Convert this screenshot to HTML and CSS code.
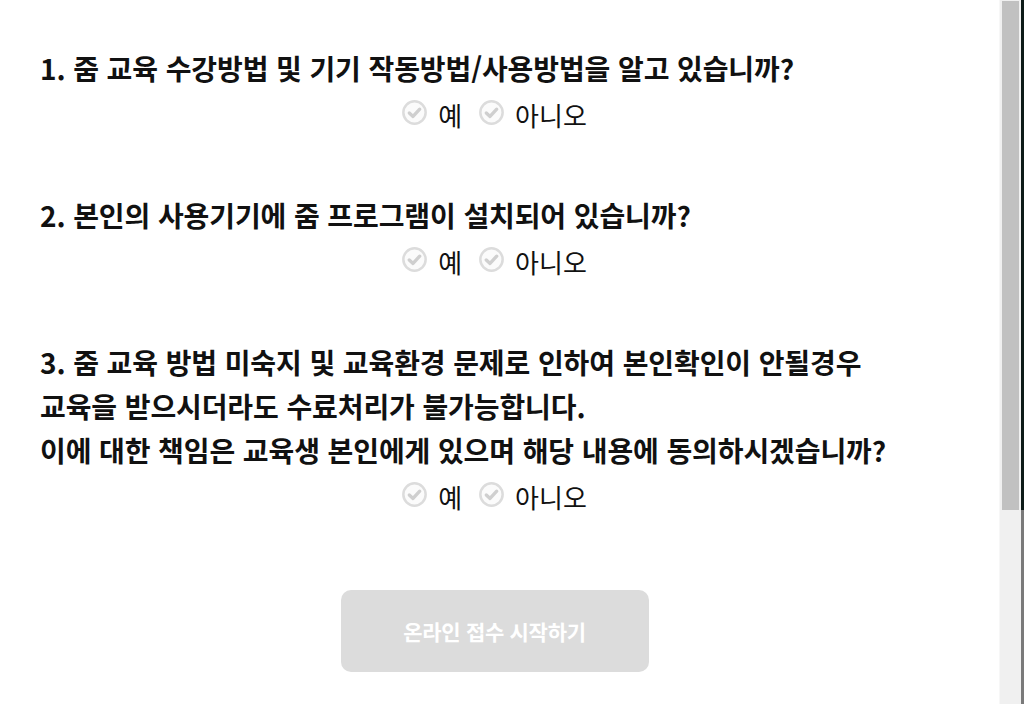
FILE: index.html
```html
<!DOCTYPE html>
<html lang="ko">
<head>
<meta charset="utf-8">
<title>온라인 접수</title>
<link rel="stylesheet" href="styles.css">
</head>
<body>
<div class="window">
  <main class="content">
    <section class="question">
      <h2 class="q-title">1. 줌 교육 수강방법 및 기기 작동방법/사용방법을 알고 있습니까?</h2>
      <div class="options">
        <label class="opt"><svg class="chk" viewBox="0 0 24 24"><circle cx="12" cy="12" r="10.7" /><path d="M7 12.4 L10.6 15.8 L17 8.8" /></svg><span>예</span></label>
        <label class="opt"><svg class="chk" viewBox="0 0 24 24"><circle cx="12" cy="12" r="10.7" /><path d="M7 12.4 L10.6 15.8 L17 8.8" /></svg><span>아니오</span></label>
      </div>
    </section>
    <section class="question">
      <h2 class="q-title">2. 본인의 사용기기에 줌 프로그램이 설치되어 있습니까?</h2>
      <div class="options">
        <label class="opt"><svg class="chk" viewBox="0 0 24 24"><circle cx="12" cy="12" r="10.7" /><path d="M7 12.4 L10.6 15.8 L17 8.8" /></svg><span>예</span></label>
        <label class="opt"><svg class="chk" viewBox="0 0 24 24"><circle cx="12" cy="12" r="10.7" /><path d="M7 12.4 L10.6 15.8 L17 8.8" /></svg><span>아니오</span></label>
      </div>
    </section>
    <section class="question">
      <h2 class="q-title">3. 줌 교육 방법 미숙지 및 교육환경 문제로 인하여 본인확인이 안될경우<br>교육을 받으시더라도 수료처리가 불가능합니다.<br>이에 대한 책임은 교육생 본인에게 있으며 해당 내용에 동의하시겠습니까?</h2>
      <div class="options">
        <label class="opt"><svg class="chk" viewBox="0 0 24 24"><circle cx="12" cy="12" r="10.7" /><path d="M7 12.4 L10.6 15.8 L17 8.8" /></svg><span>예</span></label>
        <label class="opt"><svg class="chk" viewBox="0 0 24 24"><circle cx="12" cy="12" r="10.7" /><path d="M7 12.4 L10.6 15.8 L17 8.8" /></svg><span>아니오</span></label>
      </div>
    </section>
    <div class="actions">
      <button class="start-btn" disabled>온라인 접수 시작하기</button>
    </div>
  </main>
  <div class="scrollbar"><div class="thumb"></div></div>
  <div class="edge"></div>
</div>
</body>
</html>
```
FILE: styles.css
```css
html, body {
  margin: 0;
  padding: 0;
  background: #ffffff;
}
body {
  font-family: "Noto Sans CJK KR", "Noto Sans", sans-serif;
  color: #111111;
}
.window {
  display: flex;
  height: 704px;
  overflow: hidden;
}
.content {
  flex: 1;
  padding: 46px 50px 0 40px;
  display: flex;
  flex-direction: column;
  gap: 57px;
}
.question {
  display: flex;
  flex-direction: column;
}
.q-title {
  margin: 0;
  font-size: 28px;
  font-weight: 700;
  line-height: 44px;
  letter-spacing: -0.1px;
  color: #111;
}
.options {
  display: flex;
  justify-content: center;
  align-items: center;
  gap: 17px;
  height: 44px;
  margin-top: 2px;
}
.opt {
  display: flex;
  align-items: center;
  gap: 11px;
  font-size: 26px;
  color: #111;
}
.chk {
  flex: none;
  width: 25px;
  height: 25px;
  margin-top: -3px;
}
.chk circle {
  fill: #fbfbfb;
  stroke: #dcdcdc;
  stroke-width: 2.4;
}
.chk path {
  fill: none;
  stroke: #cfcfcf;
  stroke-width: 3.2;
  stroke-linecap: round;
  stroke-linejoin: round;
}
.actions {
  display: flex;
  justify-content: center;
  margin-top: 15px;
}
.start-btn {
  width: 308px;
  height: 82px;
  border: none;
  border-radius: 10px;
  background: #dcdcdc;
  color: #ffffff;
  font-family: "Noto Sans CJK KR", sans-serif;
  font-size: 21px;
  font-weight: 700;
  letter-spacing: -0.3px;
}
.scrollbar {
  width: 17px;
  padding: 1px 2px;
  background: #f0f0f0;
  border-left: 1px solid #f7f7f7;
}
.thumb {
  height: 509px;
  background: #c1c1c1;
}
.edge {
  width: 3px;
  background: linear-gradient(#0c1a17 0, #0c1a17 510px, #7a7a7a 510px);
}
```
